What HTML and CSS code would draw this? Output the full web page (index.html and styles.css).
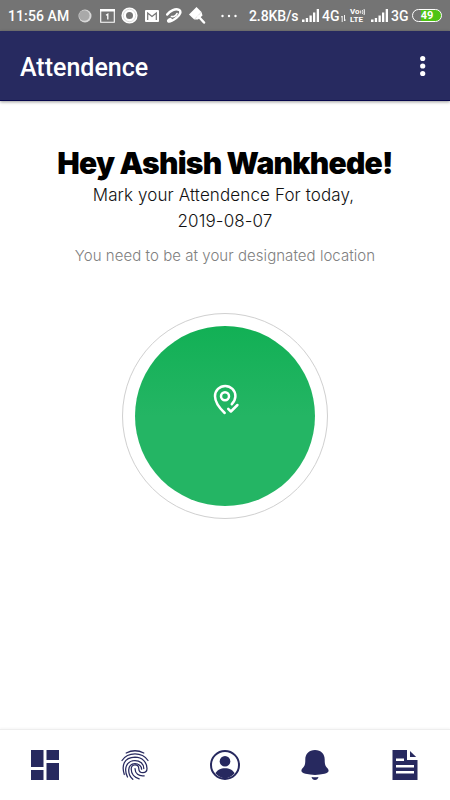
FILE: index.html
```html
<!DOCTYPE html>
<html lang="en">

<head>
    <meta charset="UTF-8">
    <meta name="viewport" content="width=device-width, initial-scale=1.0">
    <title>Attendence</title>
    <link rel="stylesheet" href="styles.css">
</head>

<body>
    <!-- status bar -->
    <div class="status">
        <span class="clock">11:56 AM</span>
        <div class="notices">
            <svg width="14" height="14" viewBox="0 0 14 14"><circle cx="7" cy="7" r="6.5" fill="#d8d8d8"/><circle cx="6.3" cy="6.5" r="5.3" fill="#a9a9a9"/></svg>
            <svg class="calendar" width="15" height="14" viewBox="0 0 15 14"><path d="M.7 1h13.6v12.3H.7z" fill="none" stroke="#fff" stroke-width="1.1"/><path d="M0 0h15v2.500H0z" fill="#fff"/><path d="M6 6.200l1.800-1v5.300" fill="none" stroke="#fff" stroke-width="1.300"/></svg>
            <svg class="ring" width="17" height="17" viewBox="0 0 17 17"><circle cx="8.5" cy="8.5" r="5.800" fill="none" stroke="#fff" stroke-width="4.600"/><circle cx="8.5" cy="8.5" r="6.200" fill="none" stroke="#ccc" stroke-width=".7"/></svg>
            <svg class="mail" width="14" height="12" viewBox="0 0 14 12"><rect width="14" height="12" rx="1" fill="#fff"/><path d="M2.700 10V3L7 6.500 11.300 3v7" fill="none" stroke="#747474" stroke-width="1.200"/></svg>
            <svg class="swirl" width="16" height="16" viewBox="0 0 16 16" fill="none" stroke="#fff" stroke-linecap="round"><path d="M1.200 6.500C4 2.500 9.500.300 13 1.800c2.800 1.500 1 5.500-2.500 8-3 2.200-6.500 4.700-8 3.700-1-.8 0-2 2-2.500" stroke-width="2.400"/><path d="M5.500 8.500c2 .5 5-.8 5.500-3" stroke-width="1.700"/></svg>
            <svg class="brush" width="17" height="17" viewBox="0 0 17 17"><path d="M0 7.500L7.500 0l5 5-7.300 7.500z" fill="#fff"/><path d="M9.500 9.500l5.500 6" stroke="#fff" stroke-width="2.500" stroke-linecap="round"/><path d="M5.200 12.500l7.300-7.500 1 3.500-4.500 4z" fill="#fff"/></svg>
            <svg class="more" width="16" height="4" viewBox="0 0 16 4" fill="#fff"><circle cx="1.500" cy="2" r="1.200"/><circle cx="8" cy="2" r="1.200"/><circle cx="14.500" cy="2" r="1.200"/></svg>
        </div>
        <span class="speed">2.8KB/s</span>
        <svg class="signal" width="17" height="13" viewBox="0 0 17 13" fill="#fff"><path d="M0 10.500h2.500V13H0zM3.800 9h2.300v4H3.800zM7.500 6.500h2.300V13H7.500zM11 3.500h2.300V13H11zM14.700 0H17v13h-2.300z"/></svg>
        <span class="net">4G</span>
        <svg class="arrows" width="5" height="7" viewBox="0 0 5 7"><path d="M1.200 7V1L0 2.500M3.500 0v6l1.300-1.500" fill="none" stroke="#fff" stroke-width=".9"/></svg>
        <div class="volte">
            <span class="vo">Vo<svg width="5" height="6" viewBox="0 0 5 6"><path d="M.7 1.500v3M2.500 1q1 2 0 4M4 0q1.500 3 0 6" fill="none" stroke="#fff" stroke-width=".9"/></svg></span>
            <span>LTE</span>
        </div>
        <svg class="signal" width="17" height="13" viewBox="0 0 17 13" fill="#fff"><path d="M0 10.500h2.500V13H0zM3.800 9h2.300v4H3.800zM7.500 6.500h2.300V13H7.500zM11 3.500h2.300V13H11zM14.700 0H17v13h-2.300z"/></svg>
        <span class="net">3G</span>
        <span class="battery"><b>49</b></span>
    </div>

    <!-- title bar -->
    <header class="bar">
        <h1>Attendence</h1>
        <svg width="6" height="22" viewBox="0 0 6 22" fill="#fff"><circle cx="2.700" cy="3.500" r="2.600"/><circle cx="2.700" cy="11" r="2.600"/><circle cx="2.700" cy="18.500" r="2.600"/></svg>
    </header>

    <main class="content">
        <h2>Hey Ashish Wankhede!</h2>
        <p class="mark">Mark your Attendence For today,</p>
        <p class="date">2019-08-07</p>
        <p class="hint">You need to be at your designated location</p>
        <div class="outer">
            <div class="punch">
                <svg width="28" height="32" viewBox="0 0 28 32" fill="none" stroke="#fff" stroke-width="2.500" stroke-linecap="round" stroke-linejoin="round"><path d="M12.700 29C8 24.500 3 18.500 3 12.200a10.200 10.200 0 0 1 20.400 0c0 3-1.400 5.500-3.600 8"/><circle cx="13" cy="12.300" r="4"/><path d="M16.200 24.800l2.700 2.700 6.500-6.500"/></svg>
            </div>
        </div>
    </main>

    <!-- bottom tabs -->
    <nav class="tabs">
        <a class="tab"><svg width="30" height="30" viewBox="0 0 30 30"><path d="M1 0h12.500v17H1zM16.500 0H29v10H16.500zM1 20h12.500v10H1zM16.500 13H29v17H16.500z" fill="#27295f"/></svg></a>
        <a class="tab">
            <svg width="30" height="30" viewBox="0 0 30 30" fill="none" stroke="#27295f" stroke-width="1.250" stroke-linecap="round">
                <path d="M6.200 3Q15-1.500 23.800 3"/>
                <path d="M2 10.500C8 1.700 22 1.700 28 10.500"/>
                <path d="M4.300 24.500C1.500 16 3.500 7.500 15 7.200c7.500 0 12 5.500 12 11.300 0 5.500-8 5.500-8.200.2-.2-5-7.600-5-7.600.4 0 4.700 3.300 8.500 8 9.700"/>
                <path d="M7.500 27C3.800 19.500 5.500 11 15 10.500c5 0 8.800 3.500 8.800 8"/>
                <path d="M12.800 29.300C7.500 24.500 6.500 14.200 15 13.600c3.600 0 6.600 2.400 6.600 5.600"/>
                <path d="M15 18.500c0 5 3.700 8 9.200 7.300"/>
            </svg>
        </a>
        <a class="tab"><svg width="30" height="30" viewBox="0 0 30 30"><circle cx="15" cy="15" r="14" fill="none" stroke="#27295f" stroke-width="2"/><circle cx="15" cy="11.300" r="5.300" fill="#27295f"/><path d="M5.500 23.500c2.500-7 16.500-7 19 0Q15 33 5.500 23.500z" fill="#27295f"/></svg></a>
        <a class="tab"><svg width="30" height="30" viewBox="0 0 30 30" fill="#27295f"><path d="M15 0c6 0 9.700 4 9.700 9.500 0 4 .3 6.300 2.300 8.300 3 3.200 1.500 5-2.500 6-6 1.500-13 1.500-19 0-4-1-5.500-2.800-2.500-6 2-2 2.300-4.300 2.300-8.300C5.300 4 9 0 15 0z"/><path d="M11.500 27q3.500.7 7 0-.8 3-3.500 3t-3.500-3z"/></svg></a>
        <a class="tab"><svg width="30" height="30" viewBox="0 0 30 30"><path d="M2.500 0H17v10h10.500v20h-25z" fill="#27295f"/><path d="M20 1v6h6.200z" fill="#27295f"/><path d="M6 8.500h8v2.600H6zM6 15h18v2.600H6zM6 21h18v2.600H6z" fill="#fff"/></svg></a>
    </nav>
</body>

</html>
```

FILE: styles.css
```css
* {
    margin: 0;
    padding: 0;
    box-sizing: border-box;
}

body {
    width: 450px;
    height: 800px;
    display: flex;
    flex-direction: column;
    overflow: hidden;
    background-color: #fff;
    font-family: Roboto, sans-serif;
}

svg {
    display: block;
    flex: none;
}

/* status bar */

.status {
    height: 31px;
    flex: none;
    display: flex;
    align-items: center;
    padding-left: 8px;
    background-color: #747474;
    color: #fff;
    font-size: 14px;
    font-weight: 500;
    white-space: nowrap;
}

.clock {
    width: 70px;
    letter-spacing: 0.1px;
}

.notices {
    width: 171px;
    display: flex;
    align-items: center;
}

.calendar {
    margin-left: 8px;
}

.ring {
    margin-left: 6px;
}

.mail {
    margin-left: 7px;
}

.swirl {
    margin-left: 7px;
}

.brush {
    margin-left: 7px;
}

.more {
    margin-left: 15px;
}

.speed {
    width: 53px;
    letter-spacing: -0.1px;
}

.signal {
    margin-right: 3px;
}

.net {
    width: 18px;
}

.arrows {
    margin: 5px 4px 0 1px;
}

.volte {
    width: 21px;
    display: flex;
    flex-direction: column;
    font-size: 8px;
    line-height: 8px;
    font-weight: 700;
}

.vo {
    display: flex;
    align-items: center;
}

.battery {
    width: 30px;
    height: 13px;
    margin-left: 3px;
    border: 1.5px solid #fff;
    border-radius: 7px;
    background: linear-gradient(to right, #747474 8px, #4fc414 8px);
    display: flex;
    align-items: center;
    justify-content: center;
}

.battery b {
    font-size: 11px;
    line-height: 10px;
}

/* title bar */

.bar {
    height: 70px;
    flex: none;
    display: flex;
    align-items: center;
    justify-content: space-between;
    padding: 0 24px 0 20px;
    background-color: #272a60;
    border-bottom: 1px solid #08084c;
    box-shadow: 0 1px 3px rgba(0, 0, 0, 0.4);
    color: #fff;
}

.bar h1 {
    padding-top: 3px;
    font-size: 25px;
    font-weight: 500;
}

/* greeting */

.content {
    flex: 1;
    display: flex;
    flex-direction: column;
    align-items: center;
    padding-top: 43px;
    font-family: Inter, sans-serif;
    color: #000;
    white-space: nowrap;
}

.content h2 {
    font-size: 30px;
    line-height: 38px;
    font-weight: 900;
    letter-spacing: -0.75px;
}

.mark,
.date {
    font-size: 17px;
    line-height: 26px;
    font-weight: 300;
    letter-spacing: 0.12px;
    color: #111;
}

.mark {
    padding-right: 3px;
}

.hint {
    margin-top: 11px;
    font-size: 15px;
    line-height: 22px;
    font-weight: 300;
    letter-spacing: 0.05px;
    color: #808080;
}

/* round button */

.outer {
    width: 206px;
    height: 206px;
    margin-top: 46px;
    padding: 12px;
    border: 1px solid #d0d0d0;
    border-radius: 50%;
}

.punch {
    width: 180px;
    height: 180px;
    border-radius: 50%;
    background: linear-gradient(#12b055, #24b564 50%, #24b564);
    display: flex;
    justify-content: center;
    padding: 58px 0 0 2px;
}

/* bottom tabs */

.tabs {
    height: 71px;
    flex: none;
    display: flex;
    border-top: 1px solid #eee;
    box-shadow: 0 -1px 2px rgba(0, 0, 0, 0.04);
}

.tab {
    width: 90px;
    padding-top: 20px;
    display: flex;
    justify-content: center;
    align-items: flex-start;
}
```
